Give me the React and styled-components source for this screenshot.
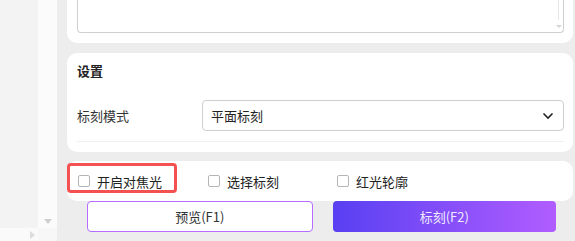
import React from "react"
import styled, { createGlobalStyle } from "styled-components"

const GlobalStyle = createGlobalStyle`
  html, body {
    margin: 0;
    padding: 0;
    background: #ededed;
  }
  body {
    font-family: "Noto Sans CJK SC", "Noto Sans", sans-serif;
    color: #333;
  }
`

const Screen = styled.div`
  display: flex;
  width: 575px;
  height: 241px;
  overflow: hidden;
`

const Side = styled.div`
  width: 57px;
  display: flex;
  flex-direction: column;
`

const SideTop = styled.div`
  flex: 1;
  display: flex;
`

const SideList = styled.div`
  width: 38px;
  background: #f3f3f3;
`

const VScroll = styled.div`
  flex: 1;
  background: #fbfbfb;
  display: flex;
  align-items: flex-end;
  justify-content: center;
  padding-bottom: 4px;
  box-sizing: border-box;
`

const HScroll = styled.div`
  height: 13px;
  display: flex;
`

const HTrack = styled.div`
  width: 38px;
  background: #fafafa;
  display: flex;
  align-items: center;
  justify-content: flex-end;
  padding-right: 3px;
  box-sizing: border-box;
`

const Corner = styled.div`
  flex: 1;
  background: #f7f7f7;
`

const Arrow = styled.span`
  width: 0;
  height: 0;
  border-style: solid;
  ${({ dir }) =>
    dir === "down"
      ? "border-width: 5px 4px 0 4px; border-color: #cfcfcf transparent transparent transparent;"
      : "border-width: 4px 0 4px 5px; border-color: transparent transparent transparent #dcdcdc;"}
`

const Main = styled.div`
  flex: 1;
  background: #ededed;
  padding: 0 2px 0 10px;
  display: flex;
  flex-direction: column;
`

const Card = styled.div`
  position: relative;
  background: #fff;
  border-radius: ${({ top }) => (top ? "0 0 10px 10px" : "10px")};
  margin-bottom: ${({ gap }) => gap || 0}px;
`

const NoteCard = styled(Card)`
  height: 43px;
  padding: 0 9px 0 10px;
  box-sizing: border-box;
`

const NoteBox = styled.div`
  height: 33px;
  border: 1px solid #cfcfcf;
  border-top: none;
  border-radius: 0 0 4px 4px;
  display: flex;
  justify-content: flex-end;
  box-sizing: border-box;
`

const NoteScroll = styled.div`
  width: 9px;
  display: flex;
  flex-direction: column;
  align-items: center;
  justify-content: space-between;
  padding-bottom: 4px;
`

const ThumbLine = styled.div`
  width: 1px;
  height: 20px;
  background: #e6e6e6;
`

const SmallArrow = styled.span`
  width: 0;
  height: 0;
  border-style: solid;
  border-width: 3px 3px 0 3px;
  border-color: #d6d6d6 transparent transparent transparent;
`

const SettingsCard = styled(Card)`
  padding: 9px 9px 10px 10px;
`

const Title = styled.div`
  font-size: 13px;
  font-weight: 700;
  line-height: 18px;
  color: #222;
`

const FormRow = styled.div`
  display: flex;
  align-items: center;
  margin-top: 20px;
  padding-bottom: 10px;
  border-bottom: 1px solid #f0f0f0;
`

const Label = styled.div`
  width: 125px;
  font-size: 13px;
  color: #333;
`

const Select = styled.div`
  flex: 1;
  height: 31px;
  border: 1px solid #cfcfcf;
  border-radius: 4px;
  box-sizing: border-box;
  display: flex;
  align-items: center;
  justify-content: space-between;
  padding: 0 9px 0 8px;
  font-size: 13px;
  color: #222;
`

const OptionsCard = styled(Card)`
  height: 40px;
  display: flex;
  align-items: center;
`

const Option = styled.label`
  width: ${({ w }) => w}px;
  box-sizing: border-box;
  padding-left: 11px;
  display: flex;
  align-items: center;
  font-size: 13px;
  color: #222;
`

const Box = styled.span`
  width: 12px;
  height: 12px;
  border: 1px solid #b5b5b5;
  border-radius: 2px;
  box-sizing: border-box;
  margin-right: 7px;
  background: #fff;
`

const Highlight = styled.div`
  position: absolute;
  left: 0;
  top: 2px;
  width: 110px;
  height: 30px;
  border: 3px solid #f45252;
  border-radius: 4px;
  box-sizing: border-box;
  pointer-events: none;
`

const Actions = styled.div`
  display: flex;
  gap: 20px;
  padding: 0 17px 0 20px;
`

const Button = styled.button`
  flex: 1;
  height: 31px;
  border-radius: 4px;
  font-family: inherit;
  font-size: 13px;
  cursor: pointer;
  border: ${({ primary }) => (primary ? "none" : "1px solid #b56cff")};
  background: ${({ primary }) =>
    primary ? "linear-gradient(90deg, #5840f2, #b15dff)" : "#fff"};
  color: ${({ primary }) => (primary ? "#f0eaff" : "#333")};
`

const Chevron = () => (
  <svg width="12" height="8" viewBox="0 0 12 8">
    <path d="M1.5 1.5 L6 6 L10.5 1.5" fill="none" stroke="#222" strokeWidth="1.6" />
  </svg>
)

export default function App() {
  return (
    <>
      <GlobalStyle />
      <Screen>
        <Side>
          <SideTop>
            <SideList />
            <VScroll>
              <Arrow dir="down" />
            </VScroll>
          </SideTop>
          <HScroll>
            <HTrack>
              <Arrow dir="right" />
            </HTrack>
            <Corner />
          </HScroll>
        </Side>
        <Main>
          <NoteCard top gap={10}>
            <NoteBox>
              <NoteScroll>
                <ThumbLine />
                <SmallArrow />
              </NoteScroll>
            </NoteBox>
          </NoteCard>
          <SettingsCard gap={9}>
            <Title>设置</Title>
            <FormRow>
              <Label>标刻模式</Label>
              <Select>
                <span>平面标刻</span>
                <Chevron />
              </Select>
            </FormRow>
          </SettingsCard>
          <OptionsCard>
            <Option w={130}>
              <Box />
              开启对焦光
            </Option>
            <Option w={129}>
              <Box />
              选择标刻
            </Option>
            <Option w={130}>
              <Box />
              红光轮廓
            </Option>
            <Highlight />
          </OptionsCard>
          <Actions>
            <Button>预览(F1)</Button>
            <Button primary>标刻(F2)</Button>
          </Actions>
        </Main>
      </Screen>
    </>
  )
}
